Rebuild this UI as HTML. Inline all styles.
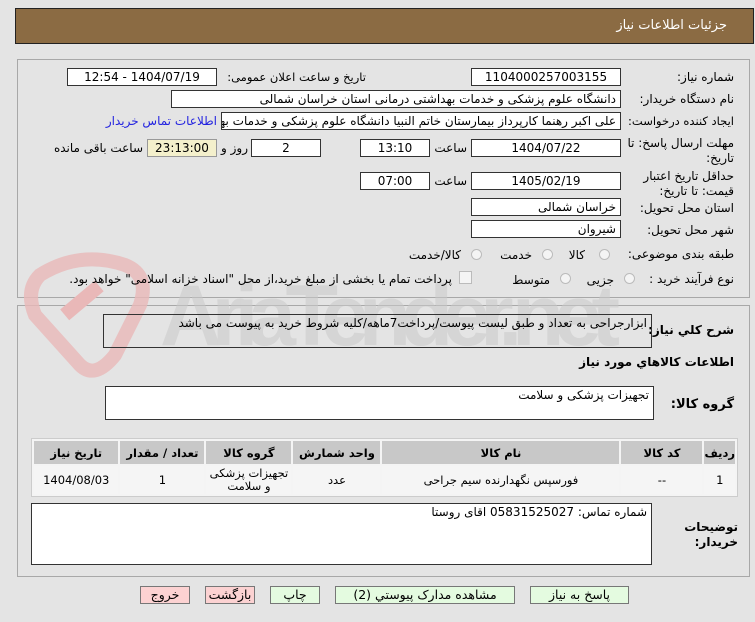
<!DOCTYPE html>
<html><head><meta charset="utf-8"><style>
*{box-sizing:border-box;margin:0;padding:0}
body{width:755px;height:622px;background:#e4e4e4;font-family:"DejaVu Sans","Noto Sans CJK SC",sans-serif;font-size:12px;color:#000;position:relative;overflow:hidden}
.a{position:absolute;white-space:nowrap}
.hdr{left:15px;top:8px;width:739px;height:36px;background:#8b6b43;border:1px solid #222}
.pnl{position:absolute;border:1px solid #a8a8a8;background:#e4e4e4}
.box{position:absolute;background:#fff;border:1px solid #333;direction:rtl;padding:0 4px;line-height:16px;white-space:nowrap;overflow:hidden;font-size:12px}
.c{text-align:center}
.lbl{position:absolute;direction:rtl;text-align:right;font-size:12px;white-space:nowrap}
.rad{position:absolute;width:11px;height:11px;border-radius:50%;border:1px solid #bbb;background:#f4f4f4}
table{position:absolute;border-collapse:separate;border-spacing:2px;background:#f4f4f4;border:1px solid #ccc;direction:rtl;font-size:11.5px}
td,th{text-align:center;vertical-align:middle}
th{background:#c8c8c8;height:23px;font-weight:bold}
td{background:#f5f5f5;height:28px;line-height:13px}
.btn{position:absolute;top:586px;height:18px;border:1px solid #777;background:#e4fbe0;text-align:center;line-height:16px;font-size:12.5px;direction:rtl}
.red{background:#fcd2d2}
</style></head><body>
<div class="a hdr"></div>
<div class="a" style="right:28px;top:18px;color:#fff;font-size:13px;direction:rtl">جزئیات اطلاعات نیاز</div>
<div class="pnl" style="left:17px;top:59px;width:733px;height:239px"></div>
<div class="pnl" style="left:17px;top:305px;width:733px;height:272px"></div>
<svg class="a" style="left:0;top:245px" width="660" height="140">
<path d="M40 30 Q80 5 125 20 Q150 30 140 60 L115 110 Q95 135 80 120 L35 70 Q25 45 40 30Z" fill="none" stroke="#e9b8b8" stroke-width="14" opacity=".8"/>
<rect x="60" y="50" width="45" height="14" fill="#e9b8b8" transform="rotate(-40 80 57)"/>
<text x="160" y="100" font-family="Liberation Sans" font-weight="bold" font-size="86" fill="#c9c9c9" opacity=".55" textLength="460">AriaTender.net</text>
</svg>

<div class="lbl" style="right:21px;top:70px">شماره نیاز:</div>
<div class="box c" style="left:471px;top:68px;width:150px;height:18px">1104000257003155</div>
<div class="lbl" style="right:389px;top:70px;font-size:11.5px;letter-spacing:-0.3px">تاریخ و ساعت اعلان عمومی:</div>
<div class="box c" style="left:67px;top:68px;width:150px;height:18px">1404/07/19 - 12:54</div>

<div class="lbl" style="right:21px;top:92px">نام دستگاه خریدار:</div>
<div class="box" style="left:171px;top:90px;width:450px;height:18px">دانشگاه علوم پزشکی و خدمات بهداشتی درمانی استان خراسان شمالی</div>

<div class="lbl" style="right:21px;top:114px;font-size:11.5px">ایجاد کننده درخواست:</div>
<div class="box" style="left:221px;top:112px;width:400px;height:18px">علی اکبر رهنما کارپرداز بیمارستان خاتم النبیا دانشگاه علوم پزشکی و خدمات بهداشتی</div>
<div class="lbl" style="right:538px;top:114px;color:#2323e0">اطلاعات تماس خریدار</div>

<div class="lbl" style="right:21px;top:136px;line-height:15px">مهلت ارسال پاسخ: تا<br>تاریخ:</div>
<div class="box c" style="left:471px;top:139px;width:150px;height:18px">1404/07/22</div>
<div class="lbl" style="right:288px;top:141px">ساعت</div>
<div class="box c" style="left:360px;top:139px;width:70px;height:18px">13:10</div>
<div class="box c" style="left:251px;top:139px;width:70px;height:18px">2</div>
<div class="lbl" style="right:507px;top:141px">روز و</div>
<div class="box c" style="left:147px;top:139px;width:70px;height:18px;background:#f4f0cc;border-color:#999">23:13:00</div>
<div class="lbl" style="right:612px;top:141px">ساعت باقی مانده</div>

<div class="lbl" style="right:21px;top:169px;line-height:15px">حداقل تاریخ اعتبار<br>قیمت: تا تاریخ:</div>
<div class="box c" style="left:471px;top:172px;width:150px;height:18px">1405/02/19</div>
<div class="lbl" style="right:288px;top:174px">ساعت</div>
<div class="box c" style="left:360px;top:172px;width:70px;height:18px">07:00</div>

<div class="lbl" style="right:21px;top:201px">استان محل تحویل:</div>
<div class="box" style="left:471px;top:198px;width:150px;height:18px">خراسان شمالی</div>
<div class="lbl" style="right:21px;top:223px">شهر محل تحویل:</div>
<div class="box" style="left:471px;top:220px;width:150px;height:18px">شیروان</div>

<div class="lbl" style="right:21px;top:247px">طبقه بندی موضوعی:</div>
<div class="rad" style="left:599px;top:249px"></div><div class="lbl" style="right:170px;top:248px">کالا</div>
<div class="rad" style="left:542px;top:249px"></div><div class="lbl" style="right:223px;top:248px">خدمت</div>
<div class="rad" style="left:471px;top:249px"></div><div class="lbl" style="right:294px;top:248px">کالا/خدمت</div>

<div class="lbl" style="right:21px;top:272px">نوع فرآیند خرید :</div>
<div class="rad" style="left:624px;top:273px"></div><div class="lbl" style="right:141px;top:273px">جزیی</div>
<div class="rad" style="left:560px;top:273px"></div><div class="lbl" style="right:205px;top:273px">متوسط</div>
<div class="a" style="left:459px;top:271px;width:13px;height:13px;border:1px solid #bbb;background:#f4f4f4"></div>
<div class="lbl" style="right:303px;top:272px">پرداخت تمام یا بخشی از مبلغ خرید،از محل "اسناد خزانه اسلامی" خواهد بود.</div>

<div class="lbl" style="right:21px;top:323px;font-weight:bold">شرح کلي نیاز:</div>
<div class="box" style="left:103px;top:314px;width:549px;height:34px;background:transparent">ابزارجراحی به تعداد و طبق لیست پیوست/پرداخت7ماهه/کلیه شروط خرید به پیوست می باشد</div>
<div class="lbl" style="right:21px;top:355px;font-weight:bold">اطلاعات کالاهاي مورد نیاز</div>
<div class="lbl" style="right:21px;top:397px;font-weight:bold;font-size:13px">گروه کالا:</div>
<div class="box" style="left:105px;top:386px;width:549px;height:34px">تجهیزات پزشکی و سلامت</div>

<table style="left:31px;top:438px;width:707px">
<tr><th style="width:27px">ردیف</th><th style="width:81px">کد کالا</th><th style="width:237px">نام کالا</th><th style="width:87px">واحد شمارش</th><th style="width:85px">گروه کالا</th><th style="width:84px">تعداد / مقدار</th><th>تاریخ نیاز</th></tr>
<tr><td>1</td><td>--</td><td>فورسپس نگهدارنده سیم جراحی</td><td>عدد</td><td>تجهیزات پزشکی و سلامت</td><td>1</td><td>1404/08/03</td></tr>
</table>

<div class="lbl" style="right:17px;top:520px;font-weight:bold;line-height:15px">توضیحات<br>خریدار:</div>
<div class="box" style="left:31px;top:503px;width:621px;height:62px">شماره تماس: 05831525027 اقای روستا</div>

<div class="btn" style="left:530px;width:99px">پاسخ به نیاز</div>
<div class="btn" style="left:335px;width:180px">مشاهده مدارک پیوستي (2)</div>
<div class="btn" style="left:270px;width:50px">چاپ</div>
<div class="btn red" style="left:205px;width:50px">بازگشت</div>
<div class="btn red" style="left:140px;width:50px">خروج</div>
</body></html>
